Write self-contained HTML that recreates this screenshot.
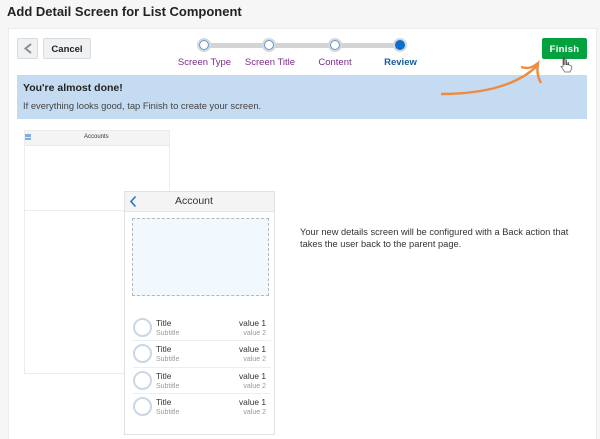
<!DOCTYPE html>
<html style="height:439px;overflow:hidden"><head><meta charset="utf-8"><style>
html,body{margin:0;padding:0}
body{width:600px;height:439px;position:relative;overflow:hidden;background:#f6f6f6;font-family:"Liberation Sans",sans-serif;color:#333}
div,span{position:absolute;box-sizing:border-box;white-space:nowrap}
.btn{top:38px;height:21px;background:#eff1f2;border:1px solid #d8dcdf;border-radius:2px}
.lab{top:57px;font-size:9.5px;line-height:12px;color:#7b2a8b;transform:translateX(-50%)}
.dot{top:38px;width:14px;height:14px;border-radius:50%;background:#fff;border:2px solid #d8d8d8;box-shadow:inset 0 0 0 1px #4a90dc}
.c{left:133px;width:19px;height:19px;border-radius:50%;border:2px solid #c9d7e6;background:#fff}
.t{left:156px;font-size:8.3px;line-height:10px;color:#333}
.s{left:156px;font-size:7px;line-height:9px;color:#999}
.v{right:334px;font-size:8.4px;line-height:10px;color:#333}
.w{right:334px;font-size:7px;line-height:9px;color:#999}
.sep{left:133px;width:138px;height:1px;background:#eceef0}
</style></head><body>
<div style="left:7px;top:2px;font-size:13px;line-height:20px;font-weight:bold;color:#222">Add Detail Screen for List Component</div>
<div style="left:8px;top:28px;width:589px;height:411px;background:#fff;border:1px solid #ececec;border-bottom:0"></div>

<div class="btn" style="left:17px;width:21px"><svg style="position:absolute;left:5px;top:3px" width="10" height="13" viewBox="0 0 10 13"><path d="M8 2L2.5 6.5L8 11" fill="none" stroke="#8c8f92" stroke-width="2"/></svg></div>
<div class="btn" style="left:43px;width:48px;font-size:9.5px;font-weight:bold;line-height:21px;text-align:center;color:#222">Cancel</div>

<div style="left:204px;top:43px;width:196px;height:5px;background:#d4d4d4"></div>
<div class="dot" style="left:197px"></div>
<div class="dot" style="left:262px"></div>
<div class="dot" style="left:328px"></div>
<div class="dot" style="left:393px;background:#0a6fd1;box-shadow:none"></div>
<div class="lab" style="left:204.5px">Screen Type</div>
<div class="lab" style="left:270px">Screen Title</div>
<div class="lab" style="left:335px">Content</div>
<div class="lab" style="left:400.5px;color:#145a9c;font-weight:bold">Review</div>

<div style="left:542px;top:38px;width:45px;height:21px;background:#04a23f;border-radius:2px;color:#fff;font-size:9.5px;font-weight:bold;line-height:23px;text-align:center;letter-spacing:.3px">Finish</div>

<div style="left:17px;top:75px;width:570px;height:44px;background:#c5dbf1"></div>
<div style="left:23px;top:81px;font-size:10.5px;line-height:14px;font-weight:bold;color:#222">You're almost done!</div>
<div style="left:23px;top:100px;font-size:9.4px;line-height:12px;color:#444">If everything looks good, tap Finish to create your screen.</div>

<svg style="position:absolute;left:435px;top:55px" width="145" height="45" viewBox="435 55 145 45">
<path d="M441 94C470 94 512 90 537 66" fill="none" stroke="#ef8a3e" stroke-width="2.4"/>
<path d="M521 67C528 69 532 68 538 63C537 70 537 76 541 83" fill="none" stroke="#ef8a3e" stroke-width="2.4"/>
<path d="M563 59H566V64L571 65.5L572 68L570 72H565L561 66.5L563 66.5Z" fill="#fff" stroke="#888" stroke-width="1"/>
<path d="M564 57.5V65M566.2 60V65M568.2 62V65" fill="none" stroke="#222" stroke-width="1"/>
</svg>

<div style="left:24px;top:130px;width:146px;height:244px;background:#fff;border:1px solid #ebecee"></div>
<div style="left:25px;top:131px;width:144px;height:15px;background:#f4f4f4;border-bottom:1px solid #e8ebee"></div>
<div style="left:25px;top:134px;width:6px;height:6px;background:#7fb0e0"></div>
<div style="left:25px;top:137px;width:6px;height:1px;background:#d5e5f5"></div>
<div style="left:84px;top:133px;font-size:6px;line-height:9px;color:#333">Accounts</div>
<div style="left:25px;top:210px;width:144px;height:1px;background:#ebecee"></div>

<div style="left:124px;top:191px;width:151px;height:244px;background:#fff;border:1px solid #e0e1e7"></div>
<div style="left:125px;top:192px;width:149px;height:20px;background:#f4f4f4;border-bottom:1px solid #e4e5ea"></div>
<svg style="position:absolute;left:129px;top:195px" width="10" height="13" viewBox="0 0 10 13"><path d="M6.5 1.5L2 6.5L6.5 11.5" fill="none" stroke="#2c74c4" stroke-width="1.6"/></svg>
<div style="left:175px;top:194px;font-size:10.5px;line-height:14px;color:#333">Account</div>
<div style="left:132px;top:218px;width:137px;height:78px;background:#f1f8fe;border:1px dashed #b3b7be"></div>

<div class="c" style="top:318px"></div>
<div class="t" style="top:318px">Title</div><div class="s" style="top:329px">Subtitle</div>
<div class="v" style="top:318px">value 1</div><div class="w" style="top:329px">value 2</div>
<div class="sep" style="top:340px"></div>
<div class="c" style="top:344px"></div>
<div class="t" style="top:344px">Title</div><div class="s" style="top:355px">Subtitle</div>
<div class="v" style="top:344px">value 1</div><div class="w" style="top:355px">value 2</div>
<div class="sep" style="top:367px"></div>
<div class="c" style="top:371px"></div>
<div class="t" style="top:371px">Title</div><div class="s" style="top:382px">Subtitle</div>
<div class="v" style="top:371px">value 1</div><div class="w" style="top:382px">value 2</div>
<div class="sep" style="top:393px"></div>
<div class="c" style="top:397px"></div>
<div class="t" style="top:397px">Title</div><div class="s" style="top:408px">Subtitle</div>
<div class="v" style="top:397px">value 1</div><div class="w" style="top:408px">value 2</div>

<div style="left:300px;top:227px;font-size:9.3px;line-height:11.5px;color:#333">Your new details screen will be configured with a Back action that<br>takes the user back to the parent page.</div>
</body></html>
